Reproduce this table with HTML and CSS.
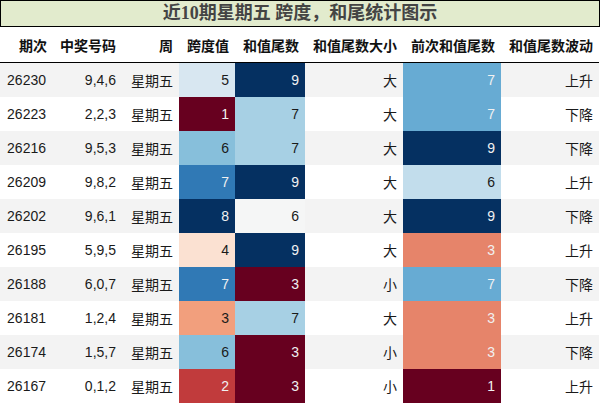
FILE: index.html
```html
<!DOCTYPE html>
<html lang="zh">
<head>
<meta charset="utf-8">
<link rel="stylesheet" href="styles.css">
</head>
<body>
<div class="page">
  <div class="title">近10期星期五 跨度，和尾统计图示</div>
  <table class="grid">
    <colgroup>
      <col class="w1"><col class="w2"><col class="w3"><col class="w4"><col class="w5"><col class="w6"><col class="w7"><col class="w8">
    </colgroup>
    <thead>
      <tr><th>期次</th><th>中奖号码</th><th>周</th><th>跨度值</th><th>和值尾数</th><th>和值尾数大小</th><th>前次和值尾数</th><th>和值尾数波动</th></tr>
    </thead>
    <tbody>
      <tr><td>26230</td><td>9,4,6</td><td>星期五</td><td class="h-lb1">5</td><td class="h-navy">9</td><td>大</td><td class="h-mb2">7</td><td>上升</td></tr>
      <tr><td>26223</td><td>2,2,3</td><td>星期五</td><td class="h-red">1</td><td class="h-lb3">7</td><td>大</td><td class="h-mb2">7</td><td>下降</td></tr>
      <tr><td>26216</td><td>9,5,3</td><td>星期五</td><td class="h-lb2">6</td><td class="h-lb3">7</td><td>大</td><td class="h-navy">9</td><td>下降</td></tr>
      <tr><td>26209</td><td>9,8,2</td><td>星期五</td><td class="h-mb">7</td><td class="h-navy">9</td><td>大</td><td class="h-lb4">6</td><td>上升</td></tr>
      <tr><td>26202</td><td>9,6,1</td><td>星期五</td><td class="h-navy">8</td><td class="h-white">6</td><td>大</td><td class="h-navy">9</td><td>下降</td></tr>
      <tr><td>26195</td><td>5,9,5</td><td>星期五</td><td class="h-pink">4</td><td class="h-navy">9</td><td>大</td><td class="h-salmon2">3</td><td>上升</td></tr>
      <tr><td>26188</td><td>6,0,7</td><td>星期五</td><td class="h-mb">7</td><td class="h-red">3</td><td>小</td><td class="h-mb2">7</td><td>下降</td></tr>
      <tr><td>26181</td><td>1,2,4</td><td>星期五</td><td class="h-salmon">3</td><td class="h-lb3">7</td><td>大</td><td class="h-salmon2">3</td><td>上升</td></tr>
      <tr><td>26174</td><td>1,5,7</td><td>星期五</td><td class="h-lb2">6</td><td class="h-red">3</td><td>小</td><td class="h-salmon2">3</td><td>下降</td></tr>
      <tr><td>26167</td><td>0,1,2</td><td>星期五</td><td class="h-brick">2</td><td class="h-red">3</td><td>小</td><td class="h-red">1</td><td>上升</td></tr>
    </tbody>
  </table>
</div>
</body>
</html>
```

FILE: styles.css
```css
html, body {
  margin: 0;
  padding: 0;
  background: #ffffff;
}
.page {
  width: 600px;
  font-family: "Liberation Sans", "Noto Sans CJK SC", sans-serif;
  color: #1a1a1a;
}
.title {
  box-sizing: border-box;
  height: 27px;
  border: 1px solid #000;
  background: #e2ebcd;
  color: #444;
  font-family: "Liberation Serif", "Noto Sans CJK SC", serif;
  font-weight: bold;
  font-size: 18px;
  line-height: 25px;
  text-align: center;
}
.grid {
  width: 599px;
  border-collapse: collapse;
  table-layout: fixed;
}
.w1 { width: 53px; }
.w2 { width: 69px; }
.w3 { width: 57px; }
.w4 { width: 56px; }
.w5 { width: 70px; }
.w6 { width: 98px; }
.w7 { width: 98px; }
.w8 { width: 98px; }
.grid th {
  height: 35px;
  padding: 0 6px 0 0;
  font-size: 14px;
  font-weight: bold;
  text-align: right;
  color: #111;
  border-bottom: 1px solid #000;
  white-space: nowrap;
}
.grid td {
  height: 34px;
  padding: 0 6px 0 0;
  font-size: 14px;
  text-align: right;
  color: #1a1a1a;
  white-space: nowrap;
}
.grid tbody tr:nth-child(odd) { background: #f3f3f3; }
.grid tbody tr:nth-child(even) { background: #ffffff; }
.grid tbody td:first-child { padding-right: 7px; }

.grid td.h-navy { background: #053061; color: #f1f1f1; }
.grid td.h-red { background: #67001f; color: #f1f1f1; }
.grid td.h-mb { background: #3079b5; color: #f1f1f1; }
.grid td.h-mb2 { background: #67abd3; color: #f1f1f1; }
.grid td.h-lb1 { background: #d8e7f1; color: #1a1a1a; }
.grid td.h-lb2 { background: #87bfdb; color: #1a1a1a; }
.grid td.h-lb3 { background: #a7d0e4; color: #1a1a1a; }
.grid td.h-lb4 { background: #c2ddec; color: #1a1a1a; }
.grid td.h-white { background: #f5f6f6; color: #1a1a1a; }
.grid td.h-pink { background: #fbe1d2; color: #1a1a1a; }
.grid td.h-salmon { background: #f29f7d; color: #1a1a1a; }
.grid td.h-salmon2 { background: #e6846a; color: #f1f1f1; }
.grid td.h-brick { background: #c13b3c; color: #f1f1f1; }
```
